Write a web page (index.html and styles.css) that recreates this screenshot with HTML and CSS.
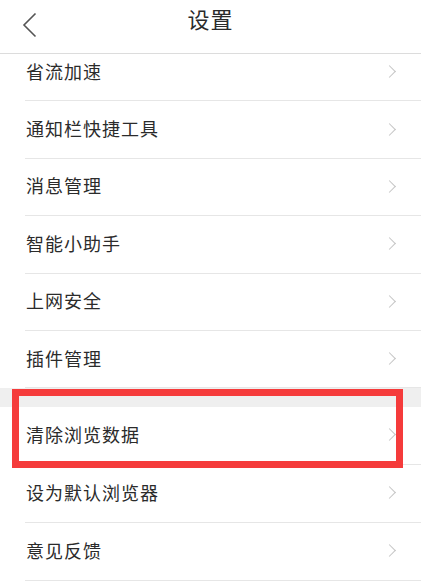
FILE: index.html
```html
<!DOCTYPE html>
<html lang="zh">
<head>
<meta charset="utf-8">
<link rel="stylesheet" href="styles.css">
</head>
<body>
<div class="page">
  <header class="topbar">
    <svg class="back" width="16" height="26" viewBox="0 0 16 26"><polyline points="13.5,1.5 2,13 13.5,24.5" fill="none" stroke="#555" stroke-width="1.6"/></svg>
    <h1 class="title">设置</h1>
  </header>
  <div class="viewport">
    <div class="list">
      <div class="group">
        <div class="row"><span class="label">省流加速</span><span class="chev"></span></div>
        <div class="row"><span class="label">通知栏快捷工具</span><span class="chev"></span></div>
        <div class="row"><span class="label">消息管理</span><span class="chev"></span></div>
        <div class="row"><span class="label">智能小助手</span><span class="chev"></span></div>
        <div class="row"><span class="label">上网安全</span><span class="chev"></span></div>
        <div class="row"><span class="label">插件管理</span><span class="chev"></span></div>
      </div>
      <div class="gap"></div>
      <div class="group">
        <div class="row tall"><span class="label">清除浏览数据</span><span class="chev"></span></div>
        <div class="row tall"><span class="label">设为默认浏览器</span><span class="chev"></span></div>
        <div class="row tall"><span class="label">意见反馈</span><span class="chev"></span></div>
      </div>
    </div>
    <div class="highlight"></div>
  </div>
</div>
</body>
</html>
```
FILE: styles.css
```css
* { box-sizing: border-box; }
html, body { margin: 0; padding: 0; background: #fff; }
body { font-family: "Noto Sans CJK SC", "Noto Sans", sans-serif; color: #2b2b2b; }
.page { width: 421px; height: 585px; overflow: hidden; position: relative; }
.topbar {
  height: 54px;
  border-bottom: 1px solid #dcdcdc;
  display: flex;
  align-items: center;
  justify-content: center;
  position: relative;
  background: #fff;
  z-index: 2;
}
.back { position: absolute; left: 22px; top: 12px; }
.title { margin: 0; font-size: 22px; font-weight: 400; color: #2b2b2b; line-height: 1; margin-top: -17px; letter-spacing: 1px; }
.viewport { position: relative; height: 531px; overflow: hidden; }
.list { margin-top: -10px; }
.row {
  height: 57.4px;
  display: flex;
  align-items: center;
  justify-content: space-between;
  padding: 0 24px 4px 26px;
  position: relative;
}
.row.tall { height: 58px; }
.row::after {
  content: "";
  position: absolute;
  left: 25px;
  right: 0;
  bottom: 0;
  height: 1px;
  background: #e6e6e6;
}
.label { font-size: 18px; line-height: 1; color: #2b2b2b; letter-spacing: 1px; }
.chev {
  width: 9px; height: 9px;
  border-top: 1.5px solid #c4c4c4;
  border-right: 1.5px solid #c4c4c4;
  transform: rotate(45deg);
  margin-right: 3px;
  margin-top: 2px;
}
.gap { height: 18.6px; background: #efefef; }
.highlight {
  position: absolute;
  left: 12px;
  top: 335px;
  width: 391px;
  height: 79px;
  border: 7px solid #f53b3b;
  pointer-events: none;
}
```
